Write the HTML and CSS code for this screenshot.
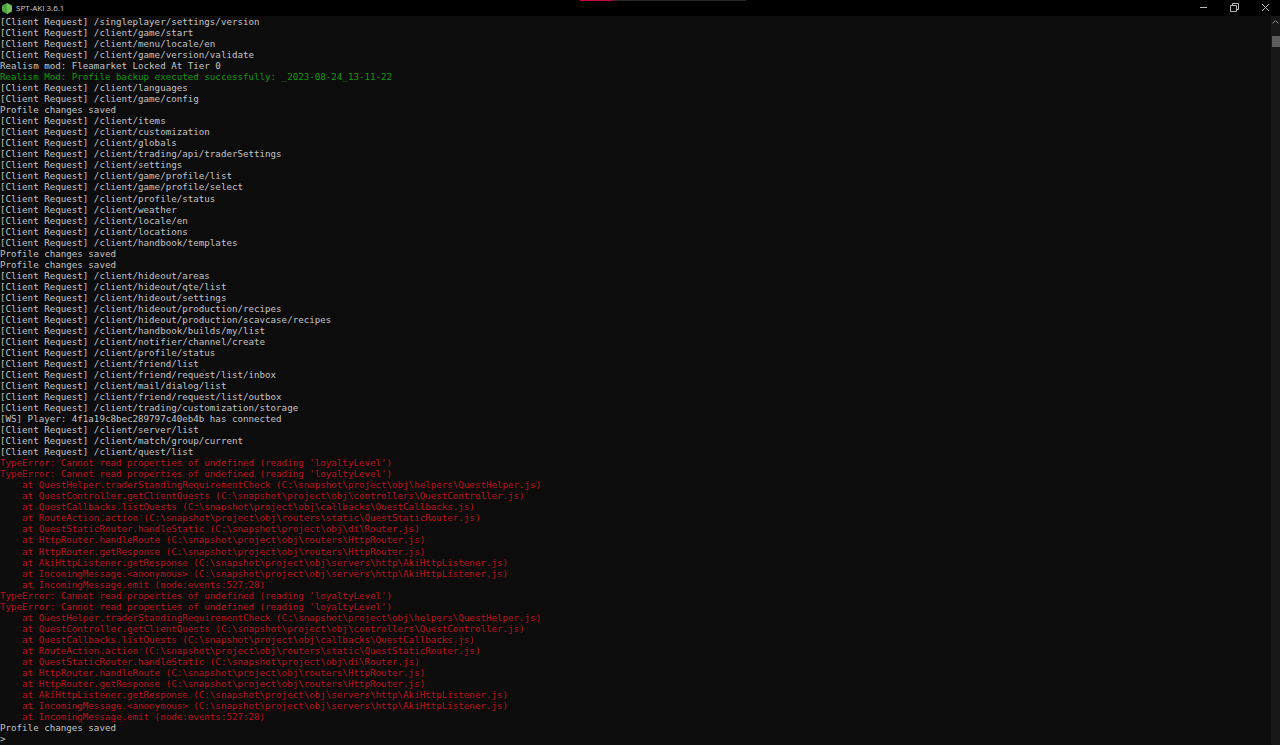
FILE: index.html
```html
<!DOCTYPE html>
<html lang="en">
<head>
<meta charset="utf-8">
<title>SPT-AKI 3.6.1</title>
<link rel="stylesheet" href="styles.css">
</head>
<body>
<div class="window">
<header class="titlebar">
  <div class="title">
    <svg class="app-icon" viewBox="0 0 10 11" aria-hidden="true"><path d="M5 0 9.2 2.2Q10 2.7 10 3.5V7.5Q10 8.3 9.2 8.8L5 11 .8 8.8Q0 8.3 0 7.5V3.5Q0 2.7.8 2.2z" fill="#4fa63f"/><path d="M5 0 9.2 2.2Q10 2.7 10 3.5V7.5Q10 8.3 9.2 8.8L5 11z" fill="#71bd5c"/></svg>
    <span>SPT-AKI 3.6.1</span>
  </div>
  <div class="overlay-bar"><div class="overlay-fill"></div></div>
  <div class="controls">
    <svg class="ctl" viewBox="0 0 31 16" aria-hidden="true"><path d="M13 7.5h7" /></svg>
    <svg class="ctl" viewBox="0 0 31 16" aria-hidden="true"><path d="M12.5 5.5h6v6h-6zM14.5 5.5v-2h6v6h-2" /></svg>
    <svg class="ctl" viewBox="0 0 31 16" aria-hidden="true"><path d="M13 4l7 7M20 4l-7 7" /></svg>
  </div>
</header>
<main class="body">
<pre class="log"><span>[Client Request] /singleplayer/settings/version
[Client Request] /client/game/start
[Client Request] /client/menu/locale/en
[Client Request] /client/game/version/validate
Realism mod: Fleamarket Locked At Tier 0
</span><span class="ok">Realism Mod: Profile backup executed successfully: _2023-08-24_13-11-22
</span><span>[Client Request] /client/languages
[Client Request] /client/game/config
Profile changes saved
[Client Request] /client/items
[Client Request] /client/customization
[Client Request] /client/globals
[Client Request] /client/trading/api/traderSettings
[Client Request] /client/settings
[Client Request] /client/game/profile/list
[Client Request] /client/game/profile/select
[Client Request] /client/profile/status
[Client Request] /client/weather
[Client Request] /client/locale/en
[Client Request] /client/locations
[Client Request] /client/handbook/templates
Profile changes saved
Profile changes saved
[Client Request] /client/hideout/areas
[Client Request] /client/hideout/qte/list
[Client Request] /client/hideout/settings
[Client Request] /client/hideout/production/recipes
[Client Request] /client/hideout/production/scavcase/recipes
[Client Request] /client/handbook/builds/my/list
[Client Request] /client/notifier/channel/create
[Client Request] /client/profile/status
[Client Request] /client/friend/list
[Client Request] /client/friend/request/list/inbox
[Client Request] /client/mail/dialog/list
[Client Request] /client/friend/request/list/outbox
[Client Request] /client/trading/customization/storage
[WS] Player: 4f1a19c8bec289797c40eb4b has connected
[Client Request] /client/server/list
[Client Request] /client/match/group/current
[Client Request] /client/quest/list
</span><span class="err">TypeError: Cannot read properties of undefined (reading 'loyaltyLevel')
TypeError: Cannot read properties of undefined (reading 'loyaltyLevel')
    at QuestHelper.traderStandingRequirementCheck (C:\snapshot\project\obj\helpers\QuestHelper.js)
    at QuestController.getClientQuests (C:\snapshot\project\obj\controllers\QuestController.js)
    at QuestCallbacks.listQuests (C:\snapshot\project\obj\callbacks\QuestCallbacks.js)
    at RouteAction.action (C:\snapshot\project\obj\routers\static\QuestStaticRouter.js)
    at QuestStaticRouter.handleStatic (C:\snapshot\project\obj\di\Router.js)
    at HttpRouter.handleRoute (C:\snapshot\project\obj\routers\HttpRouter.js)
    at HttpRouter.getResponse (C:\snapshot\project\obj\routers\HttpRouter.js)
    at AkiHttpListener.getResponse (C:\snapshot\project\obj\servers\http\AkiHttpListener.js)
    at IncomingMessage.&lt;anonymous&gt; (C:\snapshot\project\obj\servers\http\AkiHttpListener.js)
    at IncomingMessage.emit (node:events:527:28)
TypeError: Cannot read properties of undefined (reading 'loyaltyLevel')
TypeError: Cannot read properties of undefined (reading 'loyaltyLevel')
    at QuestHelper.traderStandingRequirementCheck (C:\snapshot\project\obj\helpers\QuestHelper.js)
    at QuestController.getClientQuests (C:\snapshot\project\obj\controllers\QuestController.js)
    at QuestCallbacks.listQuests (C:\snapshot\project\obj\callbacks\QuestCallbacks.js)
    at RouteAction.action (C:\snapshot\project\obj\routers\static\QuestStaticRouter.js)
    at QuestStaticRouter.handleStatic (C:\snapshot\project\obj\di\Router.js)
    at HttpRouter.handleRoute (C:\snapshot\project\obj\routers\HttpRouter.js)
    at HttpRouter.getResponse (C:\snapshot\project\obj\routers\HttpRouter.js)
    at AkiHttpListener.getResponse (C:\snapshot\project\obj\servers\http\AkiHttpListener.js)
    at IncomingMessage.&lt;anonymous&gt; (C:\snapshot\project\obj\servers\http\AkiHttpListener.js)
    at IncomingMessage.emit (node:events:527:28)
</span><span>Profile changes saved
&gt;</span></pre>
<aside class="scrollbar">
  <svg class="arrow" viewBox="0 0 9 8" aria-hidden="true"><path d="M1.5 5.5l3-3 3 3"/></svg>
  <div class="thumb"></div>
</aside>
</main>
</div>
</body>
</html>
```

FILE: styles.css
```css
html, body {
  margin: 0;
  height: 100%;
  background: #0c0c0c;
  overflow: hidden;
}
.window {
  display: flex;
  flex-direction: column;
  height: 745px;
}
.titlebar {
  position: relative;
  display: flex;
  justify-content: space-between;
  align-items: center;
  height: 16px;
  flex: none;
  background: #000;
}
.title {
  display: flex;
  align-items: center;
  gap: 4px;
  padding-left: 2px;
  font: 8px/16px "Open Sans", "Noto Sans", sans-serif;
  color: #d0d0d0;
}
.app-icon {
  width: 10px;
  height: 11px;
}
.overlay-bar {
  position: absolute;
  left: 580px;
  top: 0;
  width: 166px;
  height: 1px;
  background: #262626;
}
.overlay-fill {
  width: 33px;
  height: 1px;
  background: #c4063f;
}
.controls {
  display: flex;
}
.ctl {
  width: 31px;
  height: 16px;
  fill: none;
  stroke: #b8b8b8;
  stroke-width: 1;
}
.body {
  flex: 1;
  display: flex;
  min-height: 0;
}
.log {
  flex: 1;
  margin: 0;
  overflow: hidden;
  font-family: "DejaVu Sans Mono", monospace;
  font-size: 9.19px;
  line-height: 11.03px;
  color: #c4c4c4;
}
.ok {
  color: #119a0c;
}
.err {
  color: #bd0f1e;
}
.scrollbar {
  width: 9px;
  flex: none;
  display: flex;
  flex-direction: column;
  align-items: stretch;
  background: #171717;
}
.arrow {
  width: 9px;
  height: 8px;
  margin-top: 2px;
  fill: none;
  stroke: #8a8a8a;
  stroke-width: 1;
}
.thumb {
  height: 11px;
  margin-top: 10px;
  margin-left: 1px;
  background: #5d5d5d;
}
```
